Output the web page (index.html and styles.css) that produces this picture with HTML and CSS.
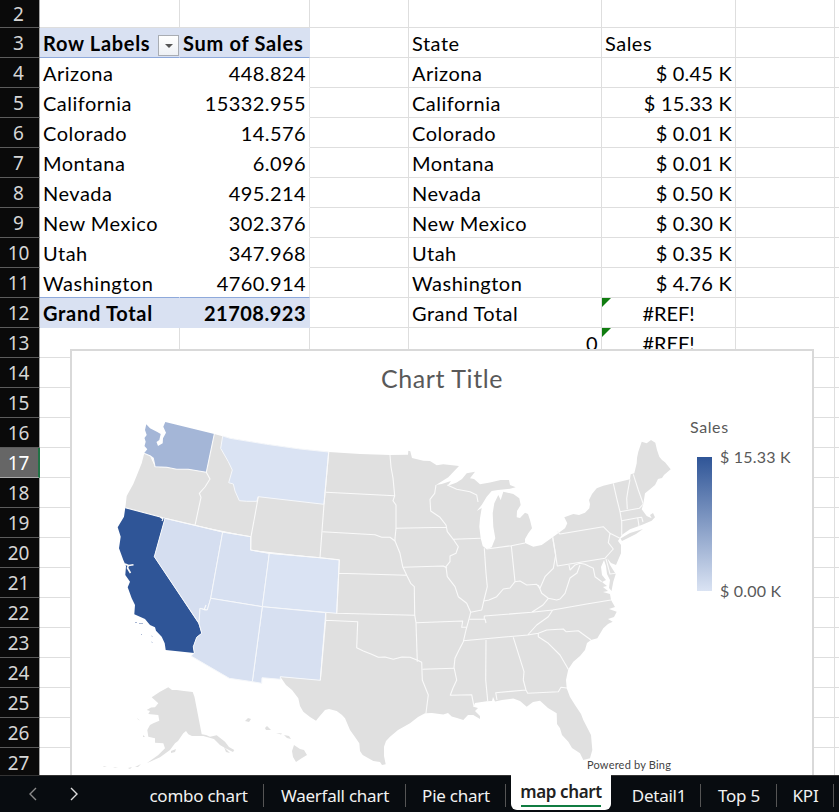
FILE: index.html
```html
<!DOCTYPE html>
<html lang="en">
<head>
<meta charset="utf-8">
<title>Sales workbook</title>
<link rel="stylesheet" href="styles.css">
</head>
<body>
<div class="app">
<main class="sheet">
  <div class="rows" id="rows"></div>
  <section class="chart">
    <h2 class="chart-title">Chart Title</h2>
    <svg class="map" viewBox="72 351 740 424" width="740" height="424">
      <g class="land">
        <path d="M144.300 453.300L141.700 463.300L137 475L133.300 484L126.700 496L126 502L125.300 507.700L165 518.300L195 525.300L251 536.700L250.700 550L320 557.700L339.300 560L336.700 613.300L325.700 612.700L320.300 680.300L280.300 676.700L286 685L292 690L298.300 698.300L300 706L303.300 711.700L310 717L316 720.700L319 717L325 710L329 709L336.700 711L342 715L345 718.300L350 730L355 737L359.300 743.300L360 751L362.700 755L368 758L373.300 761L380 762L382 765L385.700 764.300L384 756L384 746.700L386 741L390 736.700L398 730L410 723.300L418 717L425 713.300L432 713L443.300 714.500L448 713L451.700 716.500L457 718L463.300 720L468 715L473.300 715L480 719L480 716L475 711L478 708L473.300 706.700L475 703L486.700 701.300L492 701L493 697L495 701.500L502 700L513.300 698.500L520 701L526.700 706.700L533 702L540 700.700L548 708L556.700 713.300L557 724L560 728.300L562 735L568.300 741.700L572 748L580 753.300L583.300 760L590 758.300L592.300 750L591 735L583.300 720L581 714L575 705L570 697L566.700 688.300L566 680L568.300 669.300L573.300 661.700L580 656L585 650L587 643L591 640L597.300 638.300L603.300 628.300L608 624L612.700 621.700L608 619L614 617L616.700 611.700L609 609L615 607L611 600L610 594L603 592L608 591L603 587L607 586L602 582L606 580L602 575L601 567L604 560L606 566L607 574L610 580L609 588L611.500 591L613.300 581.700L615.700 574L610 565L607.300 558.300L611 563L616 565L621 553.300L621 545L618 541L621.700 535L630 529.300L641.700 525L651.700 520.700L655 517.300L653 513L650 515L651.700 518.300L646.700 516L641.700 509.300L643.300 504L645 493.300L650 489.300L655 485L658 479L662 478L664 475L670.700 469.300L665 462.300L662 460L659.300 456.700L657 450L655.300 442.700L651 440L646.700 443.300L641.700 441.700L638.300 451.700L637 458L636.700 463.300L634.300 473.300L630.700 474.300L630 479.300L603.300 485.700L596.700 488.300L592 494L589 500L590 504L589.300 508.300L585 512.700L579 515L573.300 514L564.300 517.300L567.300 523.300L565 528.300L553.300 536.700L541.700 545L533.300 546.700L525 543L525 539L528.300 533.300L532 528.300L530 520L528 514L525 512.700L520 518L516.700 517.300L517 511L520.700 505L519.300 498.300L513.300 494L503.300 491.700L500.700 500L498.300 495L494.300 503.300L492.700 513.300L493.300 526.700L495.300 538.300L491.700 547.300L486.700 549.300L482.700 546L480.700 538.300L479.300 526.700L480 518.300L481.700 508L476.700 511L481.700 505L486.700 496.700L491.700 491L498 490L510 488.700L515.700 487.300L510 485L509 480L500.700 480L490 482.500L480 484.300L474 479L470 478.300L475 471.700L466.700 473.300L462 479L456.700 482.500L447.300 486L451 481L441.700 484L436 485L448.300 477.300L459 466L443.300 464.300L436.700 465.300L430 461L423.300 460.700L412 458L410.300 451.300L408.300 450.700L408 454.700L390 455L360 454L328.700 452L300 449L266.700 444.300L230 438.300L214.300 434L206.300 472.300L188.300 469.300L155 466.700L150 455.700Z"/>
        <path d="M620.500 538.500L630 533L643 529L636 534L622 541Z"/>
        <path d="M168.300 687.300L172 690L176.700 690L184 691L192.700 692L194.500 697L201.700 734.300L206 735L210 736.700L216.700 735.300L225 741.700L229 747L234.300 750L233 752L225 748L220 745L214 739L203.300 736L192 736L188.300 734.300L186 731L183.300 733.300L178 741L175 743.300L170 750L160 757.300L146.700 763.300L158.300 755L165 748.300L163.300 743.300L155 742.700L155 738.300L148.300 736.700L147.300 730L150 725L153.300 723.300L159.300 720.700L158.300 715L148.300 714L150 711L146.700 710L151 707.500L155 707.300L158.300 703.300L151.700 697.300L160 691.700Z"/>
        <path d="M171 751l5-2l-1 3l-4 1zM135 767l6-3l-3 3zM128 768l4-1l-2 2zM103 766l4 .7l-3 .3zM113 767l5 1h-3zM137 718l3 2.500l-2-1zM143 735l2 2h-2zM224 747l6 6l-4-1zM245 721l3-3l3 1l-2 3zM239 722l2 0zM265 728l2-2l2 2l2 2h-5zM276 733l6 .5l-1 1zM284 735l3 3l4 1l-2-3zM280 737l2 1zM292 751l2-6l6 4l4 1l3 5l-5 3l-6 4l-3-5z"/>
      </g>
      <path fill="#a4b6d7" d="M146.300 424.300L150 428.300L157.300 432L160.700 434L159.300 440L156.500 442L158 446L162.700 443.300L163 438.300L166 432.700L163.300 426.700L165.300 422L214.300 434L206.300 472.300L188.300 469.300L176.700 469.300L166.700 467.300L155 466.700L153.300 458.300L150 455.700L144 453.300L147.300 449.300L144.500 446L145.700 441.700L144.500 438L146.700 435L145 430Z"/>
      <path fill="#2f5597" d="M125.300 507.700L165 518.300L154.300 556.700L198.300 623.300L201.700 633.300L196.700 637.300L193.300 646.700L194.300 653L165.700 650L164.700 643.300L161.700 636.700L156 630.700L155 627.300L150 625L145 619L134.300 614.300L135 605L131.700 598.300L127.700 587.300L130 581.700L125.300 575L126 566L123.300 560L119 548.300L120.700 536.700L117.700 527.300L124 516.700Z"/>
      <g class="edge">
        <path fill="#dae3f3" d="M222.700 436L230 438.300L266.700 444.300L300 449L328.700 452L324 504.300L258.300 496.700L256.700 501.300L246.700 501.300L239.300 500.700L235 491L233.300 484L228.700 482.700L232.300 470L228.300 461.700L220.700 448.300Z"/>
        <path fill="#d5def0" d="M165 518.300L222.700 532L210.700 598.300L207.300 610L200 608.300L199 623.300L154.300 556.700Z"/>
        <path fill="#d7e0f1" d="M222.700 532L251 536.700L250.700 550L269.300 553.300L262.300 606.700L210.700 598.300Z"/>
        <path fill="#dae3f3" d="M269.300 553.300L320 557.700L339.300 560L336.700 613.300L262.300 606.700Z"/>
        <path fill="#d7e0f1" d="M262.300 606.700L325.700 612.700L320.300 680.300L280.300 676.700L280.300 679.300L262 677.700L261.700 683.300L252.300 681.700Z"/>
        <path fill="#d7e0f1" d="M210.700 598.300L262.300 606.700L252.300 681.700L229.300 678.300L191 656L194.300 653L193.300 646.700L196.700 637.300L201.700 633.300L199 623.300L200 608.300L205 610L207.300 610Z"/>
      </g>
      <g class="borders">
        <path d="M144 453.300L150 455.700L153.300 458.300L155 466.700L166.700 467.300L176.700 469.300L188.300 469.300L206.300 472.300L210 479L205 487L199.300 493.300L201 497.300L195 525.300M214.300 434L206.300 472.300M125.300 507.700L165 518.300L195 525.300L222.700 532L251 536.700L255 515L258.300 496.700M250.700 536L250.700 550L269.300 553.300L320 557.700L324 504.300L328.700 452M160 517l3 2l-1 2M204 610l2-5"/>
        <path class="bay" d="M125 564l3.500 1.500l5-.8M128.500 565l-1 3l3 5"/>
        <path d="M326 492.300L394.700 495.700M390 455L391 467L393 478L394.700 495.700L393 500.700L396 505L396 528.300L395 538.300L395 541L400 553.300L402.700 566.700L406.700 575.300L410.700 583.300L414.300 586.700L414.700 615L416 622.700L417.300 661.700M322.300 531.700L375 534.700L381.700 537.300L390 537.300L395 541M320 557.700L339.300 559.700L338.700 573.300L406.700 575.300M338.700 573.300L336.700 613.300L414.700 615.300"/>
        <path d="M396 528.300L446 527.300M436 485L434.700 493.300L430 499.300L430.700 511L440 517.300L446 525L447.300 531.700L453.300 539.300L458.300 546.700L456 553.300L450 556L450 561.700L446 566.700L447.300 576.700L455 586.700L458.300 596.700L466.700 603.300L470.700 612.300L468.300 621.700L466 630L463.300 641.700L459 650L455 658.300L454 667.300L456.700 680L453 688L450.300 695.300L471.700 694.700L474 706.700M402.700 567.300L443.300 566L447 568M453.300 539.300L480.700 538.300M447.300 485L456.700 489.300L470 491.700L476.700 495L478 502M484.300 548.300L486 573.300L487.300 586.700L484 600L481.700 610L470.700 612.300M484 601L489 600L496.700 596.700L503.300 589L510 588L515 581.700L520 581L526.700 585L536.700 584.300L540 588.300L545 576.700L553.300 568.300L555.700 555L552.700 537.300M511.300 545.700L515 581.700M486.700 549L511.300 545.700L525 543"/>
        <path d="M552.700 537.300L557.300 566L605 558.300L607 556L613.300 549L608.300 542.700L610 533.300L603.300 526.700L560 534L557 531M610 533.300L620 538.300M613.300 483.300L616.700 498.300L620 511.700L621.700 521.700L621.700 535M630 479.300L628 490L626.700 498.300L627.300 509.300M633.300 474.300L638.300 490L643.300 504M620 511.700L639.300 508.300L643.300 504M621.700 520.700L637.700 517.700L641.700 517.300L643 522M637.700 517.700L639 526"/>
        <path d="M569 565L570 570L575 565L580 563.300L585 564.300L593.300 568.300L595 576.700L601.700 581.700M580 565L577 573L570 578L565 593.300L560 599L556.700 600L548.300 598.300L541.700 593.300L538.300 585M606 559L610 574L615.700 573.300M548.300 598.300L543 605L531.700 612.300M469.300 619.300L484.300 619.300L484.300 616L531.700 612.300L552.700 610L586.700 604L611 600M485 619l1 4M552.700 610L548.300 616.700L536.700 625L527.700 635M463.300 640.700L527.700 635L538.300 633.300L546.700 630L563.300 629L566 631.700L578.300 630.700L591 640M538.300 633.300L538.300 636.700L548.300 643.300L560 655L568.300 669.300M486 640L485.700 680L487.700 701M513.300 637.300L524 671.700L523.300 680L526 690M497 700L495.700 692.700L526 690L527.700 693.300L558.300 691.700L561 687.300L567 688"/>
        <path d="M416 622.700L462.700 621L461.700 627.300L466.700 627.300M325.700 612.700L325.700 620.300L357.700 621.700L356.700 647.700L363.300 651L371 654L378.300 657.300L385 657L393.300 659.300L402 657L410 657.300L417 660L421.700 662.300L422.300 680L428.300 695L427 705L426 713M422.700 669.300L454 668.300M325.700 620L320.300 680.300"/>
      </g>
      <g fill="#a9b7d3"><path d="M135 622h2v1h-2zM139 623h4v1h-4zM151 635l2 2l-1 0zM151 641l2 2h-1zM141 634h1v1h-1z"/></g>
    </svg>
    <div class="legend">
      <div class="legend-title">Sales</div>
      <div class="legend-scale">
        <div class="legend-bar"></div>
        <div class="legend-values"><span>$ 15.33 K</span><span>$ 0.00 K</span></div>
      </div>
    </div>
    <div class="credit">Powered by Bing</div>
  </section>
</main>
<nav class="tabs">
  <div class="arrows">
    <svg width="10" height="14" viewBox="0 0 10 14"><path d="M8 1L2 7l6 6"/></svg>
    <svg class="on" width="10" height="14" viewBox="0 0 10 14"><path d="M2 1l6 6l-6 6"/></svg>
  </div>
  <div class="tab t1">combo chart</div>
  <div class="tab t2">Waerfall chart</div>
  <div class="tab t3">Pie chart</div>
  <div class="tab active"><span>map chart</span></div>
  <div class="tab t5">Detail1</div>
  <div class="tab t6">Top 5</div>
  <div class="tab t7">KPI</div>
</nav>
</div>
<script src="sheet.js"></script>
</body>
</html>
```
FILE: styles.css
```css
* { box-sizing: border-box; }
body { margin: 0; background: #fff; overflow: hidden; font-family: Lato, "Liberation Sans", sans-serif; }
.app { width: 839px; height: 812px; display: flex; flex-direction: column; overflow: hidden; }
.sheet { position: relative; height: 775px; overflow: hidden; }
.row { display: grid; grid-template-columns: 40px 140px 130px 99px 193px 134px 99px 4px; grid-template-rows: 30px; height: 30px; font-size: 20px; line-height: 30px; letter-spacing: .5px; color: #000; }
.row.first { grid-template-rows: 28px; height: 28px; line-height: 27px; }
.cell { border-right: 1px solid #dedede; border-bottom: 1px solid #dedede; padding: 0 3px; white-space: nowrap; position: relative; }
.cell:last-child { border-right: 0; }
.head { background: #0a0a0a; color: #d6d6d6; border-right: 1px solid #a6a6a6; border-bottom-color: #5c5c5c; text-align: center; padding: 0 2px 0 0; font-family: "Noto Sans", sans-serif; font-size: 19px; line-height: 31px; letter-spacing: 0; }
.first .head { line-height: 28px; }
.head.current { background: #666; color: #fff; border-right: 2px solid #217346; border-bottom-color: #aaa; padding-right: 1px; }
.num { text-align: right; letter-spacing: .42px; }
.money { text-align: right; letter-spacing: .22px; }
.err { text-align: center; letter-spacing: -.1px; }
.err::before { content: ""; position: absolute; left: 0; top: 0; border-top: 9px solid #107c10; border-right: 9px solid transparent; }
.pivot { border-color: transparent; }
.pivot.value { border-right-color: #e6e6e6; }
.pivot.total, .pivot.title { background: #d9e1f2; font-weight: bold; letter-spacing: .7px; border-right-color: #d9e1f2; border-bottom-color: #d9e1f2; }
.pivot.total.num { letter-spacing: .5px; }
.pivot.rule, .pivot.title { border-bottom-color: #8ea9db; }
.filter { position: absolute; left: 118px; top: 7px; width: 21px; height: 21px; border: 1px solid #a9adb3; background: linear-gradient(#fff, #eef1f5); display: grid; place-items: center; }
.filter::after { content: ""; border: 4px solid transparent; border-top-color: #555; border-bottom: 0; }
.chart { position: absolute; left: 70px; top: 349px; width: 744px; height: 440px; background: #fff; border: 2px solid #d9d9d9; }
.chart-title { margin: 0; position: absolute; left: 0; right: 0; top: 9px; text-align: center; font-weight: normal; font-size: 25px; line-height: 36px; color: #595959; letter-spacing: .6px; }
.map { display: block; }
.land { fill: #e0e0e0; }
.edge { stroke: #f6f8fb; stroke-width: 1; }
.borders { fill: none; stroke: #fafafa; stroke-width: 1.1; stroke-linejoin: round; }
.bay { stroke-width: 1.6; }
.legend { position: absolute; left: 618px; top: 65px; color: #595959; font-size: 16px; line-height: 22px; letter-spacing: .2px; }
.legend-title { letter-spacing: .6px; }
.legend-scale { display: flex; gap: 8px; margin: 8px 0 0 7px; }
.legend-bar { width: 15px; height: 134px; margin-top: 11px; background: linear-gradient(#2f5597, #dae3f3); }
.legend-values { display: flex; flex-direction: column; justify-content: space-between; height: 156px; white-space: nowrap; }
.credit { position: absolute; left: 515px; top: 405px; font-size: 11px; line-height: 18px; letter-spacing: .2px; color: #444; }
.tabs { height: 37px; background: #080c10; border-top: 1px solid #333; display: flex; font-family: "Noto Sans", sans-serif; font-size: 17px; color: #f2f2f2; }
.arrows { width: 133px; display: flex; gap: 31px; padding: 11px 0 0 28px; }
.arrows svg { fill: none; stroke: #8b8b8b; stroke-width: 1.4; }
.arrows .on { stroke: #ddd; }
.tab { position: relative; text-align: center; line-height: 39px; white-space: nowrap; letter-spacing: -.25px; }
.tab::after { content: ""; position: absolute; right: 0; top: 8px; width: 1px; height: 23px; background: #555; }
.t1 { width: 131px; }
.t2 { width: 142px; }
.t3 { width: 100px; }
.t5 { width: 90px; padding-left: 6px; }
.t6 { width: 76px; }
.t7 { width: 57px; }
.active { width: 100px; margin: -1px 0 0 5px; height: 35px; background: #fff; color: #222; border-radius: 0 0 6px 6px; font-weight: 600; line-height: 34px; letter-spacing: -.4px; }
.active::after { left: 10px; right: 10px; top: 30px; width: auto; height: 2px; background: #107c41; }
```
FILE: sheet.js
```js
const states = [
  ["Arizona", "448.824", "$ 0.45 K"],
  ["California", "15332.955", "$ 15.33 K"],
  ["Colorado", "14.576", "$ 0.01 K"],
  ["Montana", "6.096", "$ 0.01 K"],
  ["Nevada", "495.214", "$ 0.50 K"],
  ["New Mexico", "302.376", "$ 0.30 K"],
  ["Utah", "347.968", "$ 0.35 K"],
  ["Washington", "4760.914", "$ 4.76 K"]
];
const cell = (text = "", cls = "") => `<div class="cell ${cls}">${text}</div>`;
let html = "";
for (let n = 2; n <= 27; n++) {
  let cells;
  if (n === 3) {
    cells = cell('Row Labels<i class="filter"></i>', "pivot title") + cell("Sum of Sales", "pivot title") + cell() + cell("State") + cell("Sales");
  } else if (n >= 4 && n <= 11) {
    const [name, sum, sales] = states[n - 4];
    const rule = n === 11 ? " rule" : "";
    cells = cell(name, "pivot" + rule) + cell(sum, "pivot value num" + rule) + cell() + cell(name) + cell(sales, "money");
  } else if (n === 12) {
    cells = cell("Grand Total", "pivot total") + cell("21708.923", "pivot total num") + cell() + cell("Grand Total") + cell("#REF!", "err");
  } else if (n === 13) {
    cells = cell() + cell() + cell() + cell("0", "num") + cell("#REF!", "err");
  } else {
    cells = cell().repeat(5);
  }
  html += `<div class="row${n === 2 ? " first" : ""}">${cell(n, "head" + (n === 17 ? " current" : ""))}${cells}${cell()}${cell()}</div>`;
}
document.getElementById("rows").innerHTML = html;
```
